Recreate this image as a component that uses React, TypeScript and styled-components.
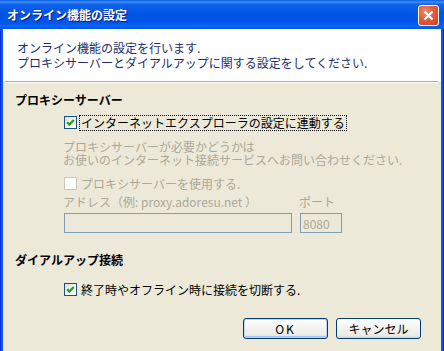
import styled, { createGlobalStyle } from 'styled-components';

const GlobalStyle = createGlobalStyle`
  html, body {
    margin: 0;
    padding: 0;
    background: #ece9d8;
  }
  body {
    font-family: "Noto Sans CJK JP", "Liberation Sans", sans-serif;
    font-size: 12px;
    color: #000;
  }
`;

const Window = styled.div`
  width: 444px;
  height: 351px;
  display: flex;
  flex-direction: column;
  background: #0c57e8;
  box-shadow: inset 1px 0 #0831d9, inset -1px 0 #0024a8;
  overflow: hidden;
`;

const TitleBar = styled.div`
  height: 29px;
  flex-shrink: 0;
  display: flex;
  align-items: center;
  justify-content: space-between;
  padding: 1px 5px 0 7px;
  box-sizing: border-box;
  background: linear-gradient(
    to bottom,
    #0a5ee6 0%,
    #3d8bf5 7%,
    #0e62ea 16%,
    #0054e3 50%,
    #0056e8 78%,
    #0a66f5 90%,
    #0054e3 100%
  );
`;

const TitleText = styled.span`
  color: #fff;
  font-weight: 700;
  font-size: 12px;
  line-height: 14px;
  text-shadow: 1px 1px #0a1883;
`;

const CloseButton = styled.div`
  width: 21px;
  height: 21px;
  box-sizing: border-box;
  border: 1px solid #fff;
  border-radius: 3px;
  background: radial-gradient(circle at 35% 30%, #f08a6c 0%, #e35b38 45%, #c9401e 100%);
  display: flex;
  align-items: center;
  justify-content: center;
`;

const Frame = styled.div`
  flex: 1;
  margin: 0 3px;
  background: #ece9d8;
  display: flex;
  flex-direction: column;
`;

const Header = styled.div`
  height: 52px;
  box-sizing: border-box;
  background: #fff;
  padding: 11px 0 0 14px;
`;

const HeaderText = styled.p`
  margin: 0;
  line-height: 15px;
  color: #1b2f6e;
`;

const Divider = styled.div`
  height: 1px;
  margin: 0 3px 0 2px;
  background: #aca899;
  border-bottom: 1px solid #fff;
`;

const Body = styled.div`
  display: flex;
  flex-direction: column;
  padding: 0 20px 0 12px;
`;

const SectionTitle = styled.div<{ $top: number }>`
  margin-top: ${(p) => p.$top}px;
  font-weight: 700;
  line-height: 14px;
`;

const Group = styled.div`
  display: flex;
  flex-direction: column;
  margin-left: 49px;
`;

const CheckRow = styled.div<{ $top: number }>`
  margin-top: ${(p) => p.$top}px;
  height: 15px;
  display: flex;
  align-items: center;
`;

const Box = styled.span<{ $disabled?: boolean }>`
  width: 13px;
  height: 13px;
  box-sizing: border-box;
  border: 1px solid ${(p) => (p.$disabled ? '#cac8bb' : '#1c5180')};
  background: ${(p) =>
    p.$disabled ? '#fff' : 'linear-gradient(135deg, #dcdcd7 0%, #fbfbf9 70%, #fff 100%)'};
  display: flex;
  flex-shrink: 0;
`;

const CheckLabel = styled.span<{ $focused?: boolean; $disabled?: boolean }>`
  margin-left: 2px;
  padding: 0 1px;
  line-height: 14px;
  border: 1px ${(p) => (p.$focused ? 'dotted #000' : 'solid transparent')};
  color: ${(p) => (p.$disabled ? '#aca899' : '#000')};
  white-space: nowrap;
`;

const Note = styled.p`
  margin: 10px 0 0 -1px;
  line-height: 13px;
  color: #aca899;
`;

const FieldRow = styled.div`
  display: flex;
  gap: 7px;
  margin-top: 4px;
  margin-left: -1px;
`;

const Field = styled.div`
  display: flex;
  flex-direction: column;
  gap: 4px;
`;

const FieldLabel = styled.span`
  line-height: 14px;
  color: #aca899;
  white-space: nowrap;
`;

const TextBox = styled.input<{ $width: number }>`
  width: ${(p) => p.$width}px;
  height: 20px;
  box-sizing: border-box;
  margin: 0 0 0 1px;
  padding: 0 2px;
  border: 1px solid #7f9db9;
  background: #ece9d8;
  color: #aca899;
  -webkit-text-fill-color: #aca899;
  font: inherit;
  font-size: 12px;
  outline: none;
`;

const ButtonBar = styled.div`
  display: flex;
  justify-content: flex-end;
  gap: 8px;
  margin-top: 21px;
`;

const Button = styled.button<{ $default?: boolean }>`
  width: 85px;
  height: 21px;
  box-sizing: border-box;
  padding: 0;
  border: 1px solid #003c74;
  border-radius: 3px;
  background: linear-gradient(to bottom, #fff 0%, #f4f4f0 40%, #ecebe6 85%, #d8d4c9 100%);
  box-shadow: ${(p) =>
    p.$default ? 'inset 0 0 0 1px #c1d3fb, inset 0 -1px 0 1px #a8c4f5' : 'none'};
  font: inherit;
  font-size: 12px;
  color: #000;
  letter-spacing: ${(p) => (p.$default ? '2px' : '0')};
`;

function Check({ checked, disabled }: { checked?: boolean; disabled?: boolean }) {
  return (
    <Box $disabled={disabled}>
      {checked && (
        <svg width="11" height="11" viewBox="0 0 11 11">
          <path d="M2.2 5.2 L4.4 7.6 L8.8 3.0" fill="none" stroke="#21a121" strokeWidth="2.2" />
        </svg>
      )}
    </Box>
  );
}

export default function App() {
  return (
    <>
      <GlobalStyle />
      <Window>
        <TitleBar>
          <TitleText>オンライン機能の設定</TitleText>
          <CloseButton>
            <svg width="13" height="13" viewBox="0 0 13 13">
              <path d="M2.5 2.5 L10.5 10.5 M10.5 2.5 L2.5 10.5" stroke="#fff" strokeWidth="2.2" />
            </svg>
          </CloseButton>
        </TitleBar>
        <Frame>
          <Header>
            <HeaderText>オンライン機能の設定を行います.</HeaderText>
            <HeaderText>プロキシサーバーとダイアルアップに関する設定をしてください.</HeaderText>
          </Header>
          <Divider />
          <Body>
            <SectionTitle $top={10}>プロキシーサーバー</SectionTitle>
            <Group>
              <CheckRow $top={8}>
                <Check checked />
                <CheckLabel $focused>インターネットエクスプローラの設定に連動する</CheckLabel>
              </CheckRow>
              <Note>
                プロキシサーバーが必要かどうかは
                <br />
                お使いのインターネット接続サービスへお問い合わせください.
              </Note>
              <CheckRow $top={10}>
                <Check disabled />
                <CheckLabel $disabled>プロキシサーバーを使用する.</CheckLabel>
              </CheckRow>
              <FieldRow>
                <Field>
                  <FieldLabel>アドレス（例: proxy.adoresu.net ）</FieldLabel>
                  <TextBox $width={228} disabled defaultValue="" />
                </Field>
                <Field>
                  <FieldLabel>ポート</FieldLabel>
                  <TextBox $width={42} disabled defaultValue="8080" />
                </Field>
              </FieldRow>
            </Group>
            <SectionTitle $top={20}>ダイアルアップ接続</SectionTitle>
            <Group>
              <CheckRow $top={15}>
                <Check checked />
                <CheckLabel>終了時やオフライン時に接続を切断する.</CheckLabel>
              </CheckRow>
            </Group>
            <ButtonBar>
              <Button $default>OK</Button>
              <Button>キャンセル</Button>
            </ButtonBar>
          </Body>
        </Frame>
      </Window>
    </>
  );
}
